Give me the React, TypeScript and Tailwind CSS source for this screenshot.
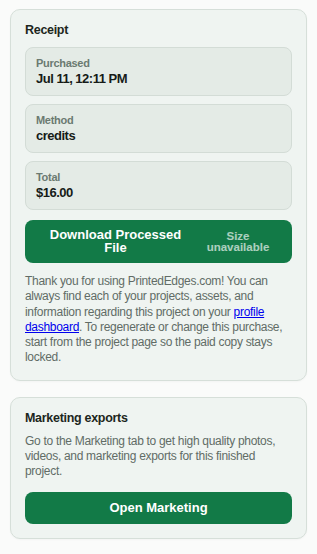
import React from 'react';

const receiptRows = [
  { label: 'Purchased', value: 'Jul 11, 12:11 PM' },
  { label: 'Method', value: 'credits' },
  { label: 'Total', value: '$16.00' },
];

function ReceiptRow({ label, value }: { label: string; value: string }) {
  return (
    <div className="rounded-lg border border-[#d3dcd6] bg-[#e4ebe6] px-2.5 py-[7.5px]">
      <div className="text-[11px] font-bold leading-[14px] tracking-[-0.3px] text-[#6b7a71]">{label}</div>
      <div className="text-[13px] font-bold leading-[18px] tracking-[-0.5px] text-[#161b18]">{value}</div>
    </div>
  );
}

export default function App() {
  return (
    <div
      className="min-h-[554px] w-full bg-[#fafbfa] px-[10px] pt-[9px] pb-4"
      style={{ fontFamily: '"Liberation Sans", Arial, sans-serif' }}
    >
      <div className="flex flex-col gap-4">
        <section className="rounded-[10px] border border-[#d6dfd9] bg-[#eff4f1] px-3.5 pt-3 pb-3.5 shadow-[0_1px_2px_rgba(0,0,0,0.03)]">
          <h2 className="text-[12.5px] font-bold leading-[17px] tracking-[-0.3px] text-[#1c2620]">Receipt</h2>
          <div className="mt-2 flex flex-col gap-2">
            {receiptRows.map((row) => (
              <ReceiptRow key={row.label} label={row.label} value={row.value} />
            ))}
          </div>
          <button className="mt-[10px] flex w-full items-center gap-1.5 rounded-lg bg-[#127a47] px-3.5 py-[9px] text-white">
            <span className="flex-1 text-center text-[13px] font-bold leading-[12.5px]">
              Download Processed File
            </span>
            <span className="w-20 text-center text-[11.5px] font-bold leading-[11px] text-white/65">
              Size
              <br />
              unavailable
            </span>
          </button>
          <p className="mt-[11px] text-[12px] leading-[15.3px] tracking-[-0.3px] text-[#616c66]">
            Thank you for using PrintedEdges.com! You can always find each of your projects, assets, and
            information regarding this project on your{' '}
            <a href="#" className="text-[#0000ee] underline">
              profile dashboard
            </a>
            . To regenerate or change this purchase, start from the project page so the paid copy stays
            locked.
          </p>
        </section>

        <section className="rounded-[10px] border border-[#d6dfd9] bg-[#eff4f1] px-3.5 pt-3 pb-3.5 shadow-[0_1px_2px_rgba(0,0,0,0.03)]">
          <h2 className="text-[12.5px] font-bold leading-[17px] tracking-[-0.3px] text-[#1c2620]">
            Marketing exports
          </h2>
          <p className="mt-[7px] text-[12px] leading-[15.3px] tracking-[-0.3px] text-[#616c66]">
            Go to the Marketing tab to get high quality photos, videos, and marketing exports for this
            finished project.
          </p>
          <button className="mt-3 w-full rounded-lg bg-[#127a47] py-[8px] text-center text-[13px] font-bold leading-4 text-white">
            Open Marketing
          </button>
        </section>
      </div>
    </div>
  );
}
